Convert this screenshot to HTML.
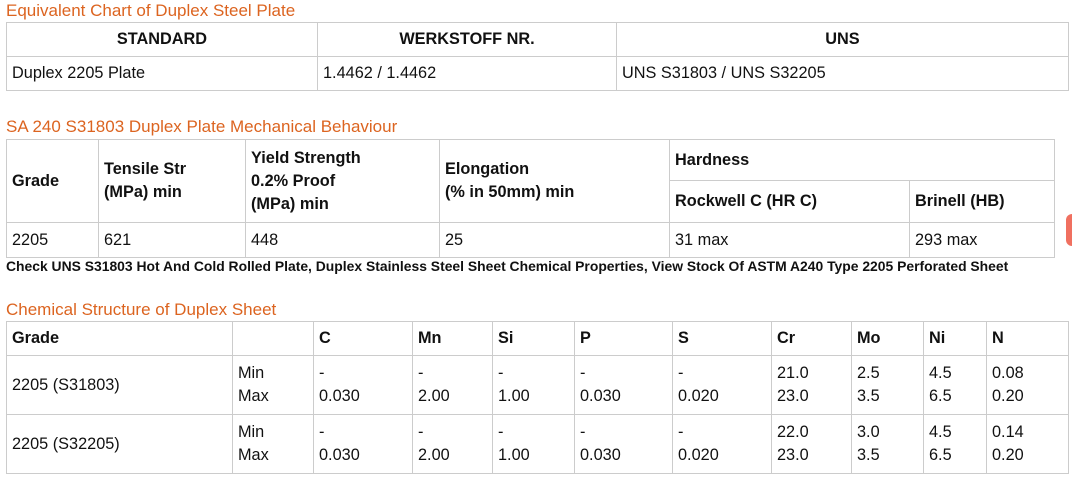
<!DOCTYPE html>
<html><head><meta charset="utf-8"><style>
body{margin:0;width:1072px;height:478px;background:#fff;font-family:"Liberation Sans","DejaVu Sans",sans-serif;font-size:16.3px;color:#111;position:relative;overflow:hidden}
.h{position:absolute;left:6px;color:#dc6420;font-size:17px}
table{position:absolute;border-collapse:collapse;table-layout:fixed}
td{border:1px solid #ccc;padding:0 5px;vertical-align:middle;line-height:23px;white-space:nowrap}
.b{font-weight:bold}
.c{text-align:center}
.note{position:absolute;left:6px;top:258px;font-size:13.9px;font-weight:bold;white-space:nowrap}
</style></head><body>
<div class="h" style="top:1px">Equivalent Chart of Duplex Steel Plate</div>
<table style="left:6px;top:22px;width:1063px">
<colgroup><col style="width:311px"><col style="width:299px"><col></colgroup>
<tr style="height:34px"><td class="b c">STANDARD</td><td class="b c">WERKSTOFF NR.</td><td class="b c">UNS</td></tr>
<tr style="height:34px"><td>Duplex 2205 Plate</td><td>1.4462 / 1.4462</td><td>UNS S31803 / UNS S32205</td></tr>
</table>
<div class="h" style="top:117px">SA 240 S31803 Duplex Plate Mechanical Behaviour</div>
<table style="left:6px;top:139px;width:1049px">
<colgroup><col style="width:92px"><col style="width:147px"><col style="width:194px"><col style="width:230px"><col style="width:240px"><col></colgroup>
<tr style="height:41px"><td class="b" rowspan="2">Grade</td><td class="b" rowspan="2">Tensile Str<br>(MPa) min</td><td class="b" rowspan="2">Yield Strength<br>0.2% Proof<br>(MPa) min</td><td class="b" rowspan="2">Elongation<br>(% in 50mm) min</td><td class="b" colspan="2">Hardness</td></tr>
<tr style="height:42px"><td class="b">Rockwell C (HR C)</td><td class="b">Brinell (HB)</td></tr>
<tr style="height:35px"><td>2205</td><td>621</td><td>448</td><td>25</td><td>31 max</td><td>293 max</td></tr>
</table>
<div style="position:absolute;left:1066px;top:214px;width:12px;height:32px;background:#f07060;border-radius:6px"></div>
<div class="note">Check UNS S31803 Hot And Cold Rolled Plate, Duplex Stainless Steel Sheet Chemical Properties, View Stock Of ASTM A240 Type 2205 Perforated Sheet</div>
<div class="h" style="top:300px">Chemical Structure of Duplex Sheet</div>
<table style="left:6px;top:321px;width:1063px">
<colgroup><col style="width:226px"><col style="width:81px"><col style="width:99px"><col style="width:80px"><col style="width:82px"><col style="width:98px"><col style="width:99px"><col style="width:80px"><col style="width:72px"><col style="width:63px"><col></colgroup>
<tr style="height:34px"><td class="b">Grade</td><td></td><td class="b">C</td><td class="b">Mn</td><td class="b">Si</td><td class="b">P</td><td class="b">S</td><td class="b">Cr</td><td class="b">Mo</td><td class="b">Ni</td><td class="b">N</td></tr>
<tr style="height:59px"><td>2205 (S31803)</td><td>Min<br>Max</td><td>-<br>0.030</td><td>-<br>2.00</td><td>-<br>1.00</td><td>-<br>0.030</td><td>-<br>0.020</td><td>21.0<br>23.0</td><td>2.5<br>3.5</td><td>4.5<br>6.5</td><td>0.08<br>0.20</td></tr>
<tr style="height:59px"><td>2205 (S32205)</td><td>Min<br>Max</td><td>-<br>0.030</td><td>-<br>2.00</td><td>-<br>1.00</td><td>-<br>0.030</td><td>-<br>0.020</td><td>22.0<br>23.0</td><td>3.0<br>3.5</td><td>4.5<br>6.5</td><td>0.14<br>0.20</td></tr>
</table>
</body></html>
